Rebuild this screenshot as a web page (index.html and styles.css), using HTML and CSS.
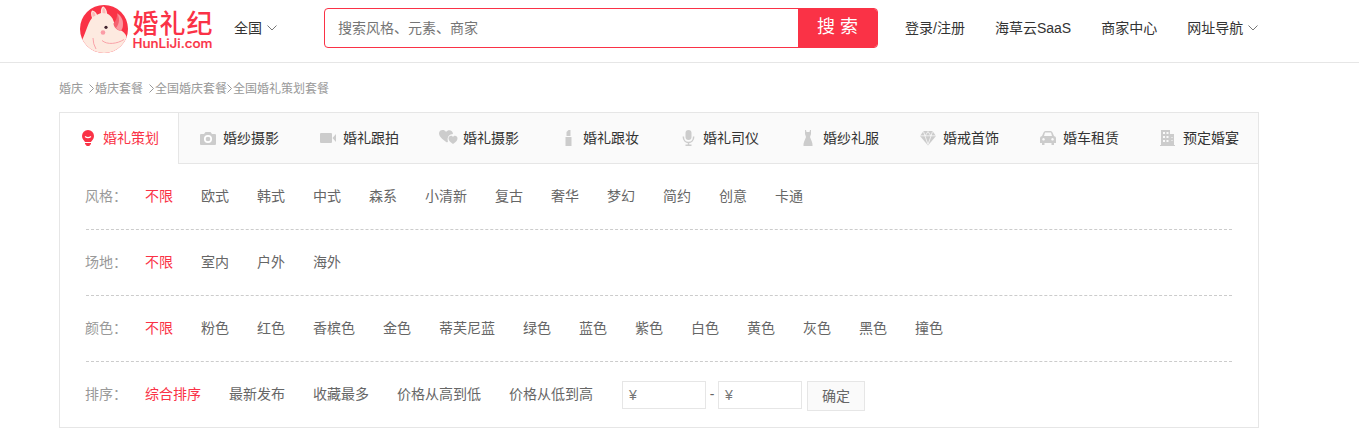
FILE: index.html
```html
<!DOCTYPE html>
<html lang="zh-CN">
<head>
<meta charset="utf-8">
<title>婚礼纪</title>
<link rel="stylesheet" href="styles.css">
</head>
<body>
<header class="header">
  <a class="logo">
    <svg width="134" height="54" viewBox="0 0 134 54">
      <defs><clipPath id="disc"><circle cx="24" cy="25" r="24"/></clipPath></defs>
      <circle cx="24" cy="25" r="24" fill="#fa3246"/>
      <g clip-path="url(#disc)">
        <path d="M0 50V39C5 33 7 20 12 14C10.500 10 11 7 12.500 6.500C15 7 16.500 9 17 10.700L21 9C20.500 5 22 2.500 23.500 2.500C26 4 27 7 27 9.500C30 11 32.500 13.500 33.500 17C35 22 39 25 42 27C45 29 47 32 47 36V50Z" fill="#fdeae0"/>
        <path d="M12.800 13C11.800 10 12 8 13 7.500C14.700 8.500 15.500 10 15.600 11.500ZM22.500 9C22 6 22.500 4 23.700 3.500C25.300 5 25.700 7 25.500 9.500Z" fill="#fbb9b8"/>
        <path d="M33.500 19.500C36 17 37.500 13 37 9C41 11 43.500 16 43 21C42.800 24 42 26 40.500 26.700C37 26.500 33.500 23 33.500 19.500Z" fill="#f5606f"/>
        <path d="M37.500 10C39.500 14 40 19 36 24C38 26 39.500 26.700 40.500 26.700C42 26 43 23 43 20C43 16 41 12 37.500 10Z" fill="#fb98a0"/>
        <circle cx="26" cy="23.300" r="1.600" fill="#432530"/>
        <circle cx="23" cy="28.500" r="2.300" fill="#fb9ca6"/>
        <path d="M22 36.500C27 41 37 40 44 35.500M13 34Q13 40 16 45" fill="none" stroke="#f9a2a8" stroke-width="1"/>
      </g>
      <text class="logo-name" x="52.500" y="29" textLength="80">婚礼纪</text>
      <text class="logo-domain" x="52.500" y="43.500" textLength="80" lengthAdjust="spacingAndGlyphs">HunLiJi.com</text>
    </svg>
  </a>
  <a class="city">全国<svg class="chevron" width="10" height="6" viewBox="0 0 10 6"><path d="M.5.5 5 5 9.500.5"/></svg></a>
  <div class="search">
    <span class="search-input">搜索风格、元素、商家</span>
    <span class="search-button">搜 索</span>
  </div>
  <nav class="links">
    <a>登录/注册</a><a>海草云SaaS</a><a>商家中心</a>
    <a>网址导航<svg class="chevron" width="10" height="6" viewBox="0 0 10 6"><path d="M.5.5 5 5 9.500.5"/></svg></a>
  </nav>
</header>

<main class="page">
  <div class="crumbs">
    <a class="spaced">婚庆</a><svg width="5" height="9" viewBox="0 0 5 9"><path d="M.5.5l4 4-4 4"/></svg><a class="spaced">婚庆套餐</a><svg width="5" height="9" viewBox="0 0 5 9"><path d="M.5.5l4 4-4 4"/></svg><a>全国婚庆套餐</a><svg width="5" height="9" viewBox="0 0 5 9"><path d="M.5.5l4 4-4 4"/></svg><a>全国婚礼策划套餐</a>
  </div>

  <section class="panel">
    <div class="tabs">
      <a class="tab active"><svg class="icon" viewBox="0 0 18 18"><path d="M9 1a6 6 0 0 0-6 6c0 3 2 4 3 6h6c1-2 3-3 3-6a6 6 0 0 0-6-6ZM6 14h6v1.500H11L10.500 17h-3L7 15.500H6Z"/><path class="cut-line" d="M6 7.500Q9 9.800 12 7.500"/></svg>婚礼策划</a>
      <a class="tab"><svg class="icon" viewBox="0 0 18 18"><path d="M2 5h3l1.500-2h5L13 5h3q1 0 1 1v9q0 1-1 1H2q-1 0-1-1V6q0-1 1-1Z"/><circle class="cut-line ring" cx="9" cy="10" r="3.200"/></svg>婚纱摄影</a>
      <a class="tab"><svg class="icon" viewBox="0 0 18 18"><path d="M1 4h10q1 0 1 1v8q0 1-1 1H1q-1 0-1-1V5q0-1 1-1ZM12.500 9 16 5v8Z"/></svg>婚礼跟拍</a>
      <a class="tab"><svg class="icon" viewBox="0 0 18 18"><path d="M7 13.500C2 10-.8 7.500-1 4.500-1 .5 4.500 0 6 3 8 0 13 1 13 5c-3.500 0-6.500 3-5 7.500Z"/><path d="M13 15C10 13 8.500 11.500 8.500 9.300 8.500 6.500 12 6 13 8c1-2 4.500-1.500 4.500 1.300 0 2.200-1.500 3.700-4.500 5.700Z"/></svg>婚礼摄影</a>
      <a class="tab"><svg class="icon" viewBox="0 0 18 18"><path d="M6.500 7V3l2-2h2v6ZM5.500 8h6v9h-6Z"/></svg>婚礼跟妆</a>
      <a class="tab"><svg class="icon" viewBox="0 0 18 18"><rect x="5.500" y="1" width="6" height="10" rx="3"/><path class="stroke" d="M3.300 7.500c0 8 10.400 8 10.400 0M8.500 13.500v3M5.500 16.200h6"/></svg>婚礼司仪</a>
      <a class="tab"><svg class="icon" viewBox="0 0 18 18"><path d="M5 1h1l.5 2h3L10 1h1v4l-1 3c1 3 3 6 2.500 9h-9C3 14 5 11 6 8L5 5Z"/></svg>婚纱礼服</a>
      <a class="tab"><svg class="icon" viewBox="0 0 18 18"><path d="M3.500 2h9l3.500 5-8 9.500L0 7Z"/><path class="cut-line thin" d="M0 6.800h16M3.500 2.500 5 7l3 8.500L11 7l1.500-4.500M5 7l3-4.500L11 7"/></svg>婚戒首饰</a>
      <a class="tab"><svg class="icon" viewBox="0 0 18 18"><path fill-rule="evenodd" d="M2 7 3.500 3.500Q4 2 5.500 2h5q1.500 0 2 1.500L14 7Q16 7.500 16 9v5h-2v2h-2.500v-2h-7v2H2v-2H0V9q0-1.500 2-2ZM4 7h8l-1-3.500H5ZM3.500 9a1.300 1.300 0 1 0 .01 0ZM12.500 9a1.300 1.300 0 1 0 .01 0Z"/></svg>婚车租赁</a>
      <a class="tab"><svg class="icon" viewBox="0 0 18 18"><path fill-rule="evenodd" d="M1 1h9v4h4v11h1v1H0v-1h1ZM3 3v2h2V3ZM6.500 3v2h2V3ZM3 7v2h2V7ZM6.500 7v2h2V7ZM3 11v2h2v-2ZM6.500 11v2h2v-2ZM11.500 8v1h1V8ZM11.500 11v1h1v-1Z"/></svg>预定婚宴</a>
    </div>
    <div class="filters">
      <div class="row"><span class="label">风格：</span><a class="on">不限</a><a>欧式</a><a>韩式</a><a>中式</a><a>森系</a><a>小清新</a><a>复古</a><a>奢华</a><a>梦幻</a><a>简约</a><a>创意</a><a>卡通</a></div>
      <div class="row"><span class="label">场地：</span><a class="on">不限</a><a>室内</a><a>户外</a><a>海外</a></div>
      <div class="row"><span class="label">颜色：</span><a class="on">不限</a><a>粉色</a><a>红色</a><a>香槟色</a><a>金色</a><a>蒂芙尼蓝</a><a>绿色</a><a>蓝色</a><a>紫色</a><a>白色</a><a>黄色</a><a>灰色</a><a>黑色</a><a>撞色</a></div>
      <div class="row"><span class="label">排序：</span><a class="on">综合排序</a><a>最新发布</a><a>收藏最多</a><a>价格从高到低</a><a>价格从低到高</a>
        <div class="price"><span class="price-input">¥</span><span class="dash">-</span><span class="price-input">¥</span><span class="confirm">确定</span></div>
      </div>
    </div>
  </section>
</main>
</body>
</html>
```

FILE: styles.css
```css
* { box-sizing: border-box; }
body {
  margin: 0;
  background: #fff;
  color: #333;
  font: 14px/20px "Liberation Sans", "Noto Sans CJK SC", sans-serif;
  white-space: nowrap;
  overflow: hidden;
}
.header {
  display: flex;
  align-items: flex-start;
  height: 63px;
  padding-left: 80px;
  border-bottom: 1px solid #e6e6e6;
}
.logo { width: 154px; padding-top: 4px; }
.logo svg { display: block; }
.logo-name { font: 500 26px "Noto Sans CJK SC", sans-serif; fill: #fa3246; }
.logo-domain { font: 500 12.5px Inter, sans-serif; fill: #fa3246; stroke: #fa3246; stroke-width: .2px; }
.city { width: 90px; padding-top: 18px; }
.chevron { margin-left: 5px; vertical-align: 2px; fill: none; stroke: #777; }
.search {
  display: flex;
  width: 554px;
  height: 40px;
  margin-top: 8px;
  border: 1px solid #fa3246;
  border-radius: 4px;
  overflow: hidden;
}
.search-input { flex: 1; padding-left: 13px; line-height: 38px; color: #757575; }
.search-button {
  width: 79px;
  background: #fa3246;
  color: #fff;
  font-size: 18px;
  line-height: 37px;
  text-align: center;
}
.links { display: flex; gap: 30px; padding: 18px 0 0 27px; }

.page { width: 1200px; margin-left: 59px; }
.crumbs {
  display: flex;
  align-items: center;
  height: 49px;
  padding-top: 2px;
  color: #999;
  font-size: 12px;
}
.crumbs svg { margin-right: 1px; fill: none; stroke: #999; }
.crumbs .spaced { margin-right: 6px; }

.panel { height: 316px; border: 1px solid #e6e6e6; }
.tabs { display: flex; height: 51px; background: #fafafa; }
.tab {
  display: flex;
  flex: none;
  align-items: center;
  gap: 6px;
  width: 120px;
  padding-left: 21px;
  border-bottom: 1px solid #e6e6e6;
}
.tab:last-child { width: 119px; }
.tab .icon { margin-right: -1px; }
.tab.active {
  width: 119px;
  padding: 0 0 1px 19px;
  background: #fff;
  border-right: 1px solid #e6e6e6;
  border-bottom: 0;
  color: #fa3246;
}
.tab.active .icon { margin-right: 0; fill: #fa3246; }
.tab:nth-child(2) .icon { margin-left: -1px; margin-right: 0; }
.icon { width: 18px; height: 18px; flex: none; fill: #ccc; overflow: visible; }
.cut-line { fill: none; stroke: #fff; stroke-width: 1.200; }
.cut-line.ring { stroke-width: 1.700; }
.cut-line.thin { stroke: #fafafa; stroke-width: .800; }
.stroke { fill: none; stroke: #ccc; stroke-width: 1.500; }

.filters { padding: 0 26px 0 26px; color: #666; }
.row {
  display: flex;
  align-items: center;
  gap: 28px;
  height: 66px;
  padding-bottom: 2px;
  border-bottom: 1px dashed #ccc;
}
.row:last-child { border-bottom: 0; height: 64px; padding-bottom: 0; }
.label { width: 32px; margin-left: -1px; color: #999; }
.price { display: flex; align-items: flex-start; padding: 3px 0 0 1px; }
.on { color: #fa3246; }
.price-input {
  width: 84px;
  height: 28px;
  padding-left: 6px;
  border: 1px solid #e6e6e6;
  line-height: 26px;
  color: #757575;
}
.dash { width: 12px; line-height: 26px; text-align: center; }
.confirm {
  width: 58px;
  height: 30px;
  margin-left: 5px;
  border: 1px solid #e6e6e6;
  background: #fafafa;
  line-height: 28px;
  text-align: center;
}
```
